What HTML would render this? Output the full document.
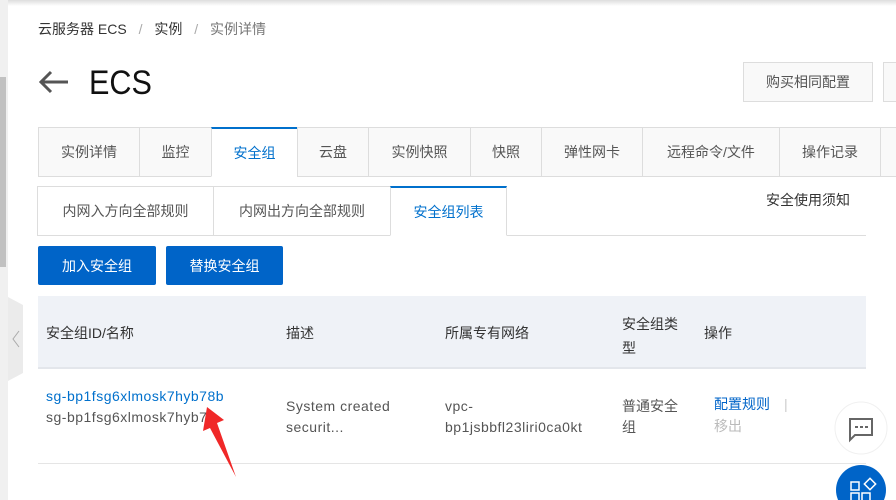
<!DOCTYPE html>
<html><head><meta charset="utf-8"><style>
*{box-sizing:border-box;margin:0;padding:0}
body{width:896px;height:500px;overflow:hidden;background:#fff;font-family:"Liberation Sans","Noto Sans CJK SC",sans-serif;color:#333;position:relative}
.a{position:absolute;white-space:nowrap}
.tab{position:absolute;top:127px;height:50px;border:1px solid #ddd;background:#f9f9f9;font-size:14px;color:#555;display:flex;align-items:center;justify-content:center}
.t2{position:absolute;top:186px;height:50px;border:1px solid #ddd;background:#fff;font-size:14px;color:#555;display:flex;align-items:center;justify-content:center}
.btn{position:absolute;top:246px;height:39px;background:#0064c8;color:#fff;font-size:14px;border-radius:2px;display:flex;align-items:center;justify-content:center}
.f13{font-size:14px}
.lat{letter-spacing:0.5px}
</style></head><body>
<div class="a" style="left:0;top:0;width:896px;height:6px;background:linear-gradient(#ddd,#fff)"></div>
<div class="a" style="left:0;top:0;width:8px;height:500px;background:#f0f0f0"></div>
<div class="a" style="left:0;top:77px;width:6px;height:190px;background:#c1c1c1"></div>
<svg class="a" style="left:8px;top:297px" width="16" height="84"><polygon points="0,0 15,8 15,76 0,84" fill="#ebebeb"/><polyline points="11,34 5,42 11,50" fill="none" stroke="#aaa" stroke-width="1"/></svg>
<div class="a" style="left:38px;top:19px;font-size:14px;color:#333">云服务器 ECS <span style="color:#aaa;margin:0 8px">/</span> 实例 <span style="color:#aaa;margin:0 8px">/</span> <span style="color:#777">实例详情</span></div>
<svg class="a" style="left:38px;top:70px" width="32" height="24"><path d="M30 12H3M13 2L3 12l10 10" fill="none" stroke="#555" stroke-width="3"/></svg>
<div class="a" style="left:89px;top:64px;font-size:34px;color:#111;transform:scaleX(0.9);transform-origin:left">ECS</div>
<div class="a" style="left:743px;top:62px;width:130px;height:40px;border:1px solid #ddd;background:#f9f9f9;font-size:14px;color:#555;display:flex;align-items:center;justify-content:center">购买相同配置</div>
<div class="a" style="left:883px;top:62px;width:30px;height:40px;border:1px solid #ddd;background:#f9f9f9"></div>
<div class="tab" style="left:38px;width:102px">实例详情</div>
<div class="tab" style="left:139px;width:73px">监控</div>
<div class="tab" style="left:211px;width:87px;background:#fff;border-top:2px solid #0070cc;border-bottom-color:#fff;color:#0070cc">安全组</div>
<div class="tab" style="left:297px;width:72px">云盘</div>
<div class="tab" style="left:368px;width:103px">实例快照</div>
<div class="tab" style="left:470px;width:72px">快照</div>
<div class="tab" style="left:541px;width:102px">弹性网卡</div>
<div class="tab" style="left:642px;width:138px">远程命令/文件</div>
<div class="tab" style="left:779px;width:102px">操作记录</div>
<div class="tab" style="left:880px;width:40px"></div>
<div class="a" style="left:506px;top:235px;width:360px;height:1px;background:#ddd"></div>
<div class="t2" style="left:37px;width:177px">内网入方向全部规则</div>
<div class="t2" style="left:213px;width:178px">内网出方向全部规则</div>
<div class="t2" style="left:390px;width:117px;border-top:2px solid #0070cc;border-bottom-color:#fff;color:#0070cc">安全组列表</div>
<div class="a" style="left:766px;top:190px;font-size:14px;color:#333">安全使用须知</div>
<div class="btn" style="left:38px;width:118px">加入安全组</div>
<div class="btn" style="left:166px;width:117px">替换安全组</div>
<div class="a" style="left:38px;top:296px;width:828px;height:73px;background:#eff2f7;border-bottom:2px solid #e3e6eb"></div>
<div class="a f13" style="left:46px;top:323px">安全组ID/名称</div>
<div class="a f13" style="left:286px;top:323px">描述</div>
<div class="a f13" style="left:445px;top:323px">所属专有网络</div>
<div class="a f13" style="left:622px;top:312px;line-height:24px">安全组类<br>型</div>
<div class="a f13" style="left:704px;top:323px">操作</div>
<div class="a f13 lat" style="left:46px;top:386px;line-height:21px"><span style="color:#0070cc">sg-bp1fsg6xlmosk7hyb78b</span><br><span style="color:#555">sg-bp1fsg6xlmosk7hyb7...</span></div>
<div class="a f13 lat" style="left:286px;top:396px;line-height:21px;color:#555">System created<br>securit...</div>
<div class="a f13 lat" style="left:445px;top:396px;line-height:21px;color:#555">vpc-<br>bp1jsbbfl23liri0ca0kt</div>
<div class="a f13" style="left:622px;top:396px;line-height:21px;color:#555">普通安全<br>组</div>
<div class="a f13" style="left:714px;top:393px;line-height:22px"><span style="color:#0064c8">配置规则</span><span style="color:#ccc;margin-left:14px">|</span><br><span style="color:#bbb">移出</span></div>
<div class="a" style="left:38px;top:463px;width:828px;height:1px;background:#e5e5e5"></div>
<svg class="a" style="left:0;top:0" width="896" height="500">
<polygon points="207,407 224,420 217,423 236,477 210,428 203,431" fill="#f02828"/>
<circle cx="861" cy="428" r="26" fill="#fff" stroke="#f0f0f0"/>
<path d="M850 419h22v16h-17l-5 5z" fill="none" stroke="#666" stroke-width="2"/>
<rect x="855" y="426" width="3" height="2" fill="#666"/><rect x="860" y="426" width="3" height="2" fill="#666"/><rect x="865" y="426" width="3" height="2" fill="#666"/>
<circle cx="861" cy="490" r="25" fill="#0064c8"/>
<rect x="851" y="482" width="8" height="8" fill="none" stroke="#fff" stroke-width="1.5"/>
<rect x="866" y="480" width="8" height="8" transform="rotate(45 870 484)" fill="none" stroke="#fff" stroke-width="1.5"/>
<rect x="851" y="493" width="8" height="8" fill="none" stroke="#fff" stroke-width="1.5"/>
<rect x="862" y="493" width="8" height="8" fill="none" stroke="#fff" stroke-width="1.5"/>
</svg>
</body></html>
